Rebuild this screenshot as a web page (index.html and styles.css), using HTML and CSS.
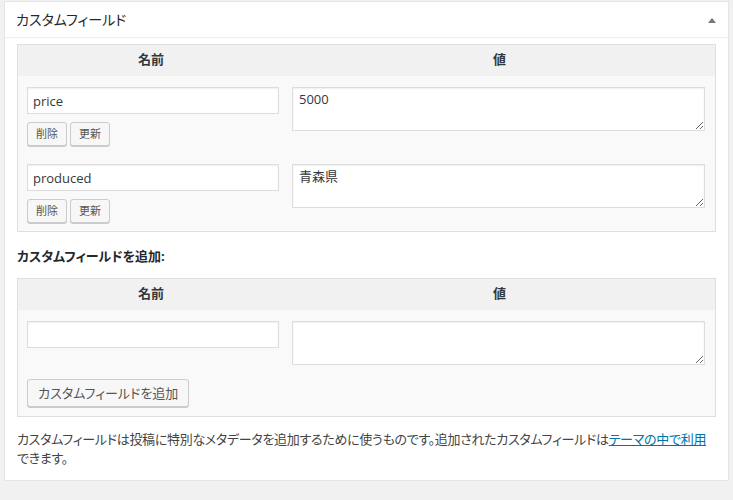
FILE: index.html
```html
<!DOCTYPE html>
<html lang="ja">
<head>
<meta charset="utf-8">
<title>カスタムフィールド</title>
<link rel="stylesheet" href="styles.css">
</head>
<body>
<div class="postbox">
  <div class="hndle">
    <h2 class="title">カスタムフィールド</h2>
    <span class="toggle"><svg width="8" height="5" viewBox="0 0 8 5"><polygon points="0,5 4,0 8,5" fill="#72777c"/></svg></span>
  </div>
  <div class="inside">
    <table class="meta">
      <thead>
        <tr><th class="col-name">名前</th><th class="col-value">値</th></tr>
      </thead>
      <tbody>
        <tr>
          <td class="cell-name">
            <input class="field" type="text" value="price">
            <div class="actions"><button class="btn-small">削除</button><button class="btn-small">更新</button></div>
          </td>
          <td class="cell-value"><textarea class="area">5000</textarea></td>
        </tr>
        <tr>
          <td class="cell-name">
            <input class="field" type="text" value="produced">
            <div class="actions"><button class="btn-small">削除</button><button class="btn-small">更新</button></div>
          </td>
          <td class="cell-value"><textarea class="area">青森県</textarea></td>
        </tr>
      </tbody>
    </table>

    <p class="add-label">カスタムフィールドを追加:</p>

    <table class="meta">
      <thead>
        <tr><th class="col-name">名前</th><th class="col-value">値</th></tr>
      </thead>
      <tbody>
        <tr>
          <td class="cell-name"><input class="field" type="text" value=""></td>
          <td class="cell-value"><textarea class="area"></textarea></td>
        </tr>
        <tr>
          <td class="cell-submit" colspan="2"><button class="btn">カスタムフィールドを追加</button></td>
        </tr>
      </tbody>
    </table>

    <p class="note">カスタムフィールドは投稿に特別なメタデータを追加するために使うものです。追加されたカスタムフィールドは<a class="note-link" href="#">テーマの中で利用</a>できます。</p>
  </div>
</div>
</body>
</html>
```

FILE: styles.css
```css
* {
  box-sizing: border-box;
}

body {
  margin: 0;
  padding: 1px 4px 0;
  background: #f1f1f1;
  font-family: "Open Sans", "Noto Sans CJK JP", sans-serif;
  font-size: 13px;
  color: #444;
  font-feature-settings: "palt";
}

.postbox {
  background: #fff;
  border: 1px solid #e5e5e5;
  box-shadow: 0 1px 1px rgba(0, 0, 0, 0.04);
}

.hndle {
  display: flex;
  align-items: center;
  justify-content: space-between;
  height: 36px;
  padding: 0 12px 0 11px;
  border-bottom: 1px solid #eee;
}

.title {
  margin: 0;
  font-size: 14px;
  font-weight: 400;
  line-height: 19px;
  color: #23282d;
}

.toggle {
  display: flex;
  padding-top: 1px;
}

.inside {
  padding: 6px 12px 12px;
}

.meta {
  width: 100%;
  border: 1px solid #dfdfdf;
  border-spacing: 0;
  background: #f9f9f9;
}

.meta th {
  background: #f1f1f1;
  padding: 5px 8px 7px;
  line-height: 19px;
  font-size: 13px;
  font-weight: 700;
  color: #32373c;
  text-align: center;
}

.col-name {
  width: 266px;
}

.meta td {
  vertical-align: top;
}

.cell-name {
  padding: 11px 5px 8px 9px;
}

.cell-value {
  padding: 11px 10px 8px 8px;
}

.meta tr + tr .cell-name,
.meta tr + tr .cell-value {
  padding-top: 10px;
}

.meta .cell-submit {
  padding: 6px 9px 9px;
}

.field {
  display: block;
  width: 100%;
  height: 27px;
  margin: 0;
  padding: 3px 5px;
  border: 1px solid #ddd;
  background: #fff;
  box-shadow: inset 0 1px 2px rgba(0, 0, 0, 0.07);
  font-family: inherit;
  font-feature-settings: inherit;
  font-size: 13px;
  color: #32373c;
  outline: none;
}

.area {
  display: block;
  width: 100%;
  height: 44px;
  margin: 0;
  padding: 2px 6px;
  border: 1px solid #ddd;
  background: #fff;
  box-shadow: inset 0 1px 2px rgba(0, 0, 0, 0.07);
  font-family: inherit;
  font-feature-settings: inherit;
  font-size: 13px;
  line-height: 19px;
  color: #32373c;
  outline: none;
}

.actions {
  display: flex;
  gap: 3px;
  margin-top: 8px;
}

.btn-small {
  height: 24px;
  margin: 0;
  padding: 0 8px;
  border: 1px solid #ccc;
  border-radius: 3px;
  background: #f7f7f7;
  box-shadow: 0 1px 0 #ccc;
  font-family: inherit;
  font-feature-settings: inherit;
  font-size: 11px;
  line-height: 22px;
  color: #555;
}

.btn {
  height: 28px;
  margin: 0;
  padding: 0 10px 1px;
  border: 1px solid #ccc;
  border-radius: 3px;
  background: #f7f7f7;
  box-shadow: 0 1px 0 #ccc;
  font-family: inherit;
  font-feature-settings: inherit;
  font-size: 13px;
  line-height: 26px;
  color: #555;
}

.add-label {
  margin: 15px 0 12px;
  font-weight: 700;
  line-height: 19px;
  color: #23282d;
}

.note {
  margin: 13px 0 0;
  line-height: 19px;
  letter-spacing: -0.3px;
}

.note-link {
  color: #0073aa;
  text-decoration: underline;
  white-space: nowrap;
}
```
